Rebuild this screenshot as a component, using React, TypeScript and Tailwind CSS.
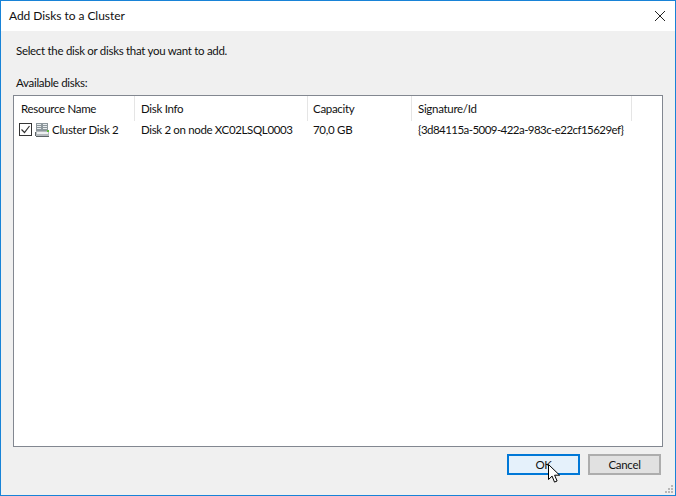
const columns = [
  { title: "Resource Name", width: "w-[121px]", pad: "pl-[7px]" },
  { title: "Disk Info", width: "w-[173px]", pad: "pl-[6px]" },
  { title: "Capacity", width: "w-[104px]", pad: "pl-[5px]" },
  { title: "Signature/Id", width: "w-[220px]", pad: "pl-[6px]" },
];

const DiskIcon = () => (
  <svg width="16" height="16" viewBox="0 0 16 16" className="shrink-0">
    <rect x="2" y="1" width="12" height="8" fill="#8d979c" />
    <path d="M3 2h4v1H3zM9 2h4v1H9zM3 4h4v1H3zM9 4h4v1H9zM3 6h4v1H3zM9 6h4v1H9z" fill="#e8ecee" />
    <path d="M2 9h13v5H2z" fill="#b4babd" />
    <path d="M1 10h1v4H1zM2 14h13v1H2z" fill="#5d6467" />
    <path d="M3 10h11v2H3z" fill="#eef0f1" />
    <rect x="13" y="8" width="2" height="2" fill="#5fbf3a" />
  </svg>
);

const Cursor = () => (
  <svg width="14" height="22" viewBox="0 0 14 22" className="absolute left-[38px] top-[7px]">
    <path d="M1.5 1.5v15l3.6-3.4 2.4 6 2.6-1.1-2.5-5.8h5z" fill="#fff" stroke="#000" strokeWidth="1" />
  </svg>
);

const App = () => {
  return (
    <div className="w-[676px] h-[496px] flex flex-col bg-[#f0f0f0] border border-[#1883d7] font-['Lato',sans-serif] text-[11.5px] leading-[16px] tracking-[-0.3px] text-[#111] overflow-hidden relative">
      <div className="h-[30px] shrink-0 bg-white flex items-center justify-between pl-[8px] pr-[9px] pb-[1px]">
        <span className="text-[12px] tracking-[-0.05px]">Add Disks to a Cluster</span>
        <svg width="12" height="12" viewBox="0 0 12 12">
          <path d="M1 1l10 10M11 1L1 11" stroke="#222" strokeWidth="1" fill="none" />
        </svg>
      </div>

      <div className="flex-1 flex flex-col pl-[15px] pr-[12px] min-h-0">
        <p className="mt-[12px]">Select the disk or disks that you want to add.</p>
        <p className="mt-[16px] mb-[4px]">Available disks:</p>

        <div className="h-[352px] w-[650px] -ml-[3px] bg-white border border-[#828790]">
          <div className="flex h-[25px] items-stretch">
            {columns.map((c) => (
              <div key={c.title} className={`${c.width} ${c.pad} flex items-center border-r border-[#e5e5e5] h-[25px]`}>
                {c.title}
              </div>
            ))}
          </div>
          <div className="flex items-center h-[17px]">
            <div className="w-[121px] flex items-center gap-[2px] pl-[5px]">
              <span className="w-[13px] h-[13px] shrink-0 border border-[#333] bg-white flex items-center justify-center">
                <svg width="11" height="11" viewBox="0 0 11 11">
                  <path d="M1.5 5.5l3 3 5-6.5" stroke="#333" strokeWidth="1.2" fill="none" />
                </svg>
              </span>
              <DiskIcon />
              <span className="whitespace-nowrap">Cluster Disk 2</span>
            </div>
            <div className="w-[173px] pl-[6px] whitespace-nowrap tracking-[-0.35px]">Disk 2 on node XC02LSQL0003</div>
            <div className="w-[104px] pl-[5px]">70,0 GB</div>
            <div className="w-[220px] pl-[6px] whitespace-nowrap tracking-[-0.55px]">{"{3d84115a-5009-422a-983c-e22cf15629ef}"}</div>
          </div>
        </div>

        <div className="flex justify-end gap-[8px] mt-[7px] pr-[2px]">
          <button className="relative w-[73px] h-[21px] border-2 border-[#0078d7] bg-[#e5f1fb] text-center">
            OK
            <Cursor />
          </button>
          <button className="w-[73px] h-[21px] border-2 border-[#adadad] bg-[#e1e1e1] text-center">Cancel</button>
        </div>
      </div>

      <svg width="10" height="10" viewBox="0 0 10 10" className="absolute right-[1px] bottom-[1px]">
        <path d="M7 1h2v2H7zM4 4h2v2H4zM7 4h2v2H7zM1 7h2v2H1zM4 7h2v2H4zM7 7h2v2H7z" fill="#b8b8b8" />
      </svg>
    </div>
  );
};

export default App;
